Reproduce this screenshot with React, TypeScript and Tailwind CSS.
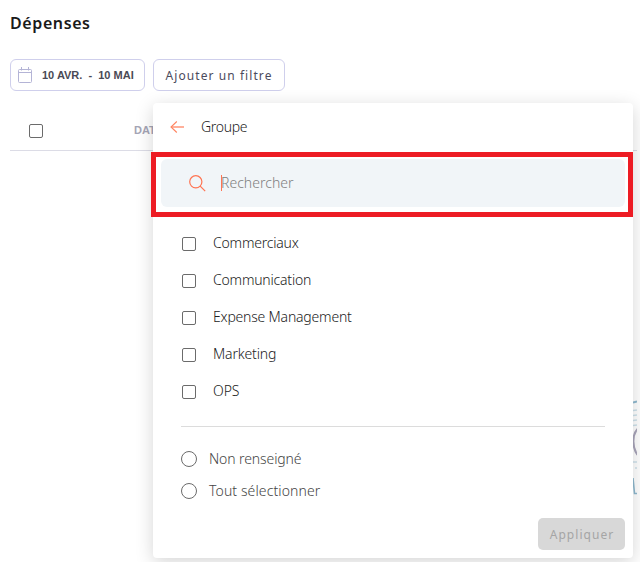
import React from 'react';

const groups = [
  { name: 'Commerciaux', tracking: 'tracking-[-0.2px]' },
  { name: 'Communication', tracking: 'tracking-[-0.2px]' },
  { name: 'Expense Management', tracking: 'tracking-[-0.2px]' },
  { name: 'Marketing', tracking: 'tracking-[-0.15px]' },
  { name: 'OPS', tracking: 'tracking-[-0.1px]' },
];

const bulkOptions = [
  { name: 'Non renseigné', tracking: 'tracking-[-0.1px]' },
  { name: 'Tout sélectionner', tracking: 'tracking-[0.1px]' },
];

const Checkbox: React.FC = () => (
  <span className="block w-3.5 h-3.5 shrink-0 rounded-[2px] border border-[#6b6b6b] bg-white" />
);

const CalendarIcon: React.FC = () => (
  <svg width="15" height="17" viewBox="0 0 15 17" fill="none" stroke="#b4b4d6" className="shrink-0">
    <rect x="0.5" y="2.5" width="13" height="13" rx="1" />
    <path d="M0.5 5.5h13M3.5 0v3.5M10.5 0v3.5" />
  </svg>
);

const ArrowIcon: React.FC = () => (
  <svg width="15" height="13" viewBox="0 0 15 13" fill="none" className="shrink-0">
    <path d="M14 6H1.5" stroke="#ffb09a" strokeWidth="2" />
    <path d="M6.8 0.5L1 6l5.8 5.5" stroke="#ff8460" strokeWidth="1.1" />
  </svg>
);

const SearchIcon: React.FC = () => (
  <svg width="17" height="17" viewBox="0 0 17 17" fill="none" stroke="#ff7452" strokeWidth="1.2" className="shrink-0">
    <circle cx="6.8" cy="6.8" r="6.1" />
    <path d="M11.2 11.2l5 5" />
  </svg>
);

// Illustration of the empty table, mostly hidden behind the menu
const EmptyIllustration: React.FC = () => (
  <svg width="4" height="96" viewBox="0 0 4 96" fill="none" className="absolute left-[633px] top-[400px]">
    <path d="M0 2.5L4 1.5" stroke="#8fb9cf" strokeWidth="2" />
    <path d="M0 10.5l4-.5M0 15.5l4-.5M0 20.5l4-.5M0 25.5l4-.5M0 62h4M2 68h2" stroke="#cfe2eb" strokeWidth="1.6" />
    <path d="M4.5 29C-1 35 -1 47 4.5 55" stroke="#a9a5ba" strokeWidth="2" />
    <path d="M0 78l1.5 15.5H4" stroke="#8fb9cf" strokeWidth="1.6" />
  </svg>
);

const GroupMenu: React.FC = () => (
  <div className="absolute left-[153px] top-[103px] flex h-[455px] w-[480px] flex-col rounded-[4px] bg-white px-2 pb-2 shadow-[0_4px_18px_rgba(0,0,0,0.17)]">
    <div className="flex h-12 items-center gap-4 pl-[9px] text-[14px] text-[#222]">
      <ArrowIcon />
      <span className="-mt-0.5 tracking-[-0.3px] font-light">Groupe</span>
    </div>

    <div className="mt-2 flex h-12 shrink-0 items-center rounded-md bg-[#f1f5f8] pl-7">
      <SearchIcon />
      <span className="ml-[15px] h-4 w-px bg-[#ff7452]" />
      <span className="-ml-px -mt-0.5 text-[14px] font-light text-[#808080] tracking-[0.02px]">Rechercher</span>
    </div>

    <div className="mt-[18px] flex flex-col pl-[21px]">
      {groups.map((group) => (
        <div key={group.name} className="flex h-[37px] items-center gap-[17px]">
          <Checkbox />
          <span className={`-mt-0.5 text-[14px] font-light text-[#222] ${group.tracking}`}>{group.name}</span>
        </div>
      ))}
    </div>

    <div className="mx-5 mt-4 h-px shrink-0 bg-[#dcdcdc]" />

    <div className="mt-4 flex flex-col pl-5">
      {bulkOptions.map((option) => (
        <div key={option.name} className="flex h-8 items-center gap-3">
          <span className="block h-4 w-4 shrink-0 rounded-full border border-[#6b6b6b]" />
          <span className={`-mt-0.5 text-[14px] font-light text-[#444] ${option.tracking}`}>{option.name}</span>
        </div>
      ))}
    </div>

    <button className="mt-auto flex h-8 w-[87px] shrink-0 items-center justify-center self-end rounded-[5px] bg-[#d8d8d8] pt-px pl-px text-[12px] tracking-[1.05px] text-[#a5a5a5]">
      Appliquer
    </button>
  </div>
);

export default function App() {
  return (
    <div className="relative h-[562px] w-[640px] overflow-hidden bg-white font-['Noto_Sans',sans-serif]">
      <div className="w-[637px] pl-2.5">
        <h1 className="pt-[11px] text-[16px] leading-6 font-semibold tracking-[0.6px] text-[#1a1a1a]">Dépenses</h1>

        <div className="mt-6 flex gap-2">
          <button className="flex h-8 w-[135px] items-center gap-[9px] rounded-md border border-[#cfcfec] pl-[7px] font-['Liberation_Sans',sans-serif] text-[11px] font-bold whitespace-pre text-[#4a4a55]">
            <CalendarIcon />
            <span>10 AVR.  -  10 MAI</span>
          </button>
          <button className="h-8 w-[132px] rounded-md border border-[#cfcfec] pt-0.5 text-[12px] tracking-[1.08px] text-[#4b4b5c]">
            Ajouter un filtre
          </button>
        </div>

        <div className="mt-5 flex h-10 items-center border-b border-[#dcdce6] pl-[19px]">
          <Checkbox />
          <span className="ml-[91px] font-['Liberation_Sans',sans-serif] text-[11px] font-bold text-[#a5a5b5]">DATE</span>
        </div>
      </div>

      <EmptyIllustration />
      <GroupMenu />

      {/* Highlight around the search field */}
      <div className="absolute left-[151px] top-[152px] h-[65px] w-[482px] border-[5px] border-[#ed1c24]" />
    </div>
  );
}
